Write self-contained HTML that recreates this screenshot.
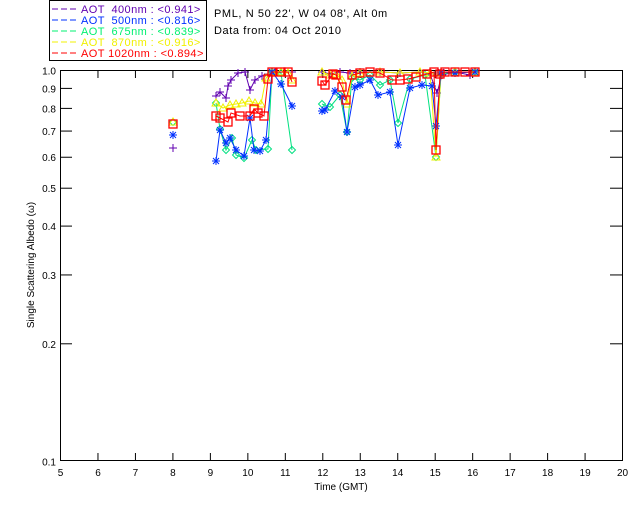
<!DOCTYPE html><html><head><style>body{margin:0;background:#fff}svg{display:block}text{font-family:"Liberation Sans",sans-serif;font-size:10px}.lg{font-size:11px;letter-spacing:0.4px;white-space:pre}.tt{font-size:11px;letter-spacing:0.6px}</style></head><body>
<svg id="s" width="640" height="512" xmlns="http://www.w3.org/2000/svg" xml:space="preserve">
<rect x="49.5" y="0.5" width="157" height="60" fill="none" stroke="#000"/>
<g>
<line x1="52" y1="9" x2="76" y2="9" stroke="#6000b0" stroke-dasharray="6,3"/><text class="lg" x="81" y="13" fill="#6000b0">AOT  400nm : &lt;0.941&gt;</text>
<line x1="52" y1="20" x2="76" y2="20" stroke="#0030ff" stroke-dasharray="6,3"/><text class="lg" x="81" y="24" fill="#0030ff">AOT  500nm : &lt;0.816&gt;</text>
<line x1="52" y1="31" x2="76" y2="31" stroke="#00f070" stroke-dasharray="6,3"/><text class="lg" x="81" y="35" fill="#00f070">AOT  675nm : &lt;0.839&gt;</text>
<line x1="52" y1="42" x2="76" y2="42" stroke="#f0f000" stroke-dasharray="6,3"/><text class="lg" x="81" y="46" fill="#f0f000">AOT  870nm : &lt;0.916&gt;</text>
<line x1="52" y1="53" x2="76" y2="53" stroke="#ff0000" stroke-dasharray="6,3"/><text class="lg" x="81" y="57" fill="#ff0000">AOT 1020nm : &lt;0.894&gt;</text>
</g>
<text class="tt" x="214" y="17">PML, N 50 22', W 04 08', Alt 0m</text>
<text class="tt" x="214" y="34">Data from: 04 Oct 2010</text>
<rect x="60.5" y="70.5" width="562" height="390" fill="none" stroke="#000"/>
<g id="ax" stroke="#000"></g>
<g id="lab"></g>
<text x="341" y="490" text-anchor="middle">Time (GMT)</text>
<text transform="translate(34,265) rotate(-90)" text-anchor="middle">Single Scattering Albedo (ω)</text>
<g id="data"></g>
</svg>
<script>
var NS="http://www.w3.org/2000/svg",ax=document.getElementById('ax'),lab=document.getElementById('lab'),dg=document.getElementById('data');
function el(p,t,a,txt){var e=document.createElementNS(NS,t);for(var k in a)e.setAttribute(k,a[k]);if(txt)e.textContent=txt;p.appendChild(e);return e}
for(var t=5;t<=20;t++){var x=60.5+(t-5)*37.47;if(t>5&&t<20){el(ax,'line',{x1:x,y1:461,x2:x,y2:453});el(ax,'line',{x1:x,y1:70,x2:x,y2:78});}
el(lab,'text',{x:x,y:476,'text-anchor':'middle'},''+t);}
var vs=[1,.9,.8,.7,.6,.5,.4,.3,.2,.1];vs.forEach(function(v){var y=70.5-391*Math.log10(v);
if(v<1&&v>.1){el(ax,'line',{x1:60,y1:y,x2:72,y2:y});el(ax,'line',{x1:622,y1:y,x2:610,y2:y});}
el(lab,'text',{x:56,y:y+4,'text-anchor':'end'},v==1?'1.0':''+v);});
var S={
p:{c:'#6000b0',m:'+',a:[[216,96],[220,92],[226,98],[228,86],[231,80],[238,73],[245,72],[250,90],[255,80],[262,76],[268,74],[275,72],[292,72]],b:[[322,72],[330,74],[340,72],[350,73],[360,72],[380,72],[400,73],[420,72],[430,74],[437,93],[442,75],[455,72],[470,75],[475,72]]},
y:{c:'#f0f000',m:'t',a:[[216,103],[223,108],[230,105],[236,104],[242,103],[249,101],[255,103],[261,104],[266,78],[272,72],[281,72],[288,73],[292,80]],b:[[322,72],[330,75],[336,74],[342,80],[347,104],[352,76],[360,73],[380,72],[400,73],[420,72],[430,73],[436,157],[441,73],[455,72],[475,72]]},
r:{c:'#ff0000',m:'s',a:[[216,116],[220,118],[228,122],[231,113],[240,116],[250,116],[254,109],[258,113],[264,116],[268,79],[272,72],[281,72],[288,72],[292,82]],b:[[322,81],[325,85],[333,74],[336,75],[342,87],[346,100],[352,75],[360,73],[370,72],[380,73],[392,80],[400,80],[408,79],[416,77],[427,74],[434,72],[436,150],[440,74],[445,72],[455,72],[465,72],[475,72]]},
g:{c:'#00e080',m:'d',a:[[216,103],[220,129],[226,150],[232,138],[236,155],[244,158],[252,140],[256,150],[268,149],[272,72],[281,73],[292,150]],b:[[322,104],[330,107],[340,95],[347,132],[352,78],[360,80],[370,75],[380,85],[390,80],[398,123],[410,79],[425,75],[436,157],[441,74],[455,72],[475,72]]},
bl:{c:'#0030ff',m:'*',a:[[216,161],[220,130],[226,143],[230,138],[236,150],[244,156],[250,118],[254,150],[260,151],[266,140],[272,72],[281,84],[292,106]],b:[[322,111],[325,110],[335,91],[342,97],[347,132],[355,87],[360,85],[370,80],[378,95],[390,92],[398,145],[410,88],[422,85],[432,86],[436,126],[441,72],[455,73],[475,72]]}};
var single={p:148,bl:135,g:122,y:122,r:124};
function mk(c,m,x,y){if(m=='+'){el(dg,'path',{d:'M'+(x-4)+' '+y+'h8M'+x+' '+(y-4)+'v8',stroke:c,fill:'none'})}
else if(m=='*'){el(dg,'path',{d:'M'+(x-4)+' '+y+'h8M'+x+' '+(y-4)+'v8M'+(x-3)+' '+(y-3)+'l6 6M'+(x+3)+' '+(y-3)+'l-6 6',stroke:c,fill:'none'})}
else if(m=='d'){el(dg,'path',{d:'M'+x+' '+(y-3.5)+'l3.5 3.5l-3.5 3.5l-3.5-3.5z',stroke:c,fill:'none'})}
else if(m=='t'){el(dg,'path',{d:'M'+x+' '+(y-4)+'l4 7h-8z',stroke:c,fill:'none'})}
else {el(dg,'rect',{x:x-4,y:y-4,width:8,height:8,stroke:c,fill:'none','stroke-width':1.3})}}
['p','g','y','bl','r'].forEach(function(k){var s=S[k];[s.a,s.b].forEach(function(a){
el(dg,'polyline',{points:a.map(function(q){return q.join(',')}).join(' '),fill:'none',stroke:s.c});
a.forEach(function(q){mk(s.c,s.m,q[0],q[1])});});mk(s.c,s.m,173,single[k]);});
</script>
</body></html>
